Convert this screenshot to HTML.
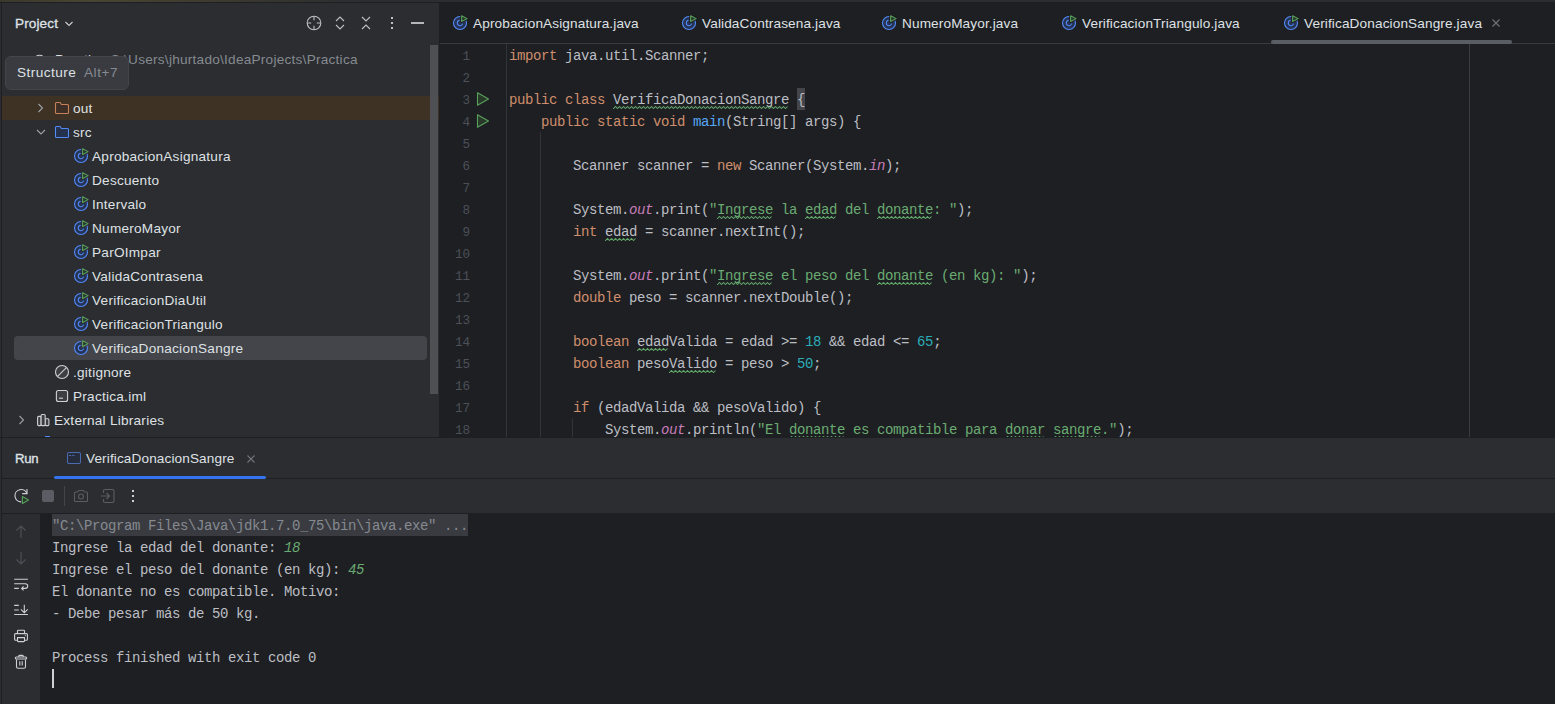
<!DOCTYPE html>
<html><head><meta charset="utf-8"><style>
*{margin:0;padding:0;box-sizing:border-box}
html,body{width:1555px;height:704px;overflow:hidden;background:#1E1F22}
body{position:relative;font-family:"Liberation Sans",sans-serif;font-size:13px;color:#DFE1E5}
.abs{position:absolute}
.ui{font-family:"Liberation Sans",sans-serif;font-size:13.6px;letter-spacing:0.25px;white-space:pre;line-height:24px}
.mono{font-family:"Liberation Mono",monospace;font-size:14px;letter-spacing:-0.4px;white-space:pre;line-height:22px}
</style></head><body>
<div class="abs" style="left:0;top:0;width:1555px;height:2px;background:linear-gradient(90deg,#3a372c 0px,#4a4532 90px,#3f3b2f 200px,#2B2D30 360px)"></div>
<div class="abs" style="left:0px;top:2px;width:1555px;height:1px;background:#1E1F22;"></div>
<div class="abs" style="left:0px;top:3px;width:439px;height:434px;background:#2B2D30;"></div>
<div class="abs" style="left:0px;top:3px;width:1px;height:434px;background:#2B2D30;"></div>
<div class="abs" style="left:1px;top:3px;width:1px;height:434px;background:#1E1F22;"></div>
<div class="abs" style="left:439px;top:3px;width:1px;height:434px;background:#1E1F22;"></div>
<div class="abs" style="left:440px;top:3px;width:1115px;height:434px;background:#1E1F22;"></div>
<div class="abs" style="left:0px;top:437px;width:1555px;height:1px;background:#1E1F22;"></div>
<div class="abs" style="left:0px;top:438px;width:1555px;height:266px;background:#2B2D30;"></div>
<div class="abs" style="left:1px;top:438px;width:1px;height:266px;background:#1E1F22;"></div>
<div class="abs" style="left:2px;top:96px;width:437px;height:24px;background:#3E3224;"></div>
<div class="abs" style="left:14px;top:336px;width:413px;height:24px;background:#43454A;border-radius:4px"></div>
<div class="abs ui" style="left:15px;top:12px;color:#DFE1E5;letter-spacing:0.1px;-webkit-text-stroke:0.3px #DFE1E5">Project</div>
<svg class="abs" style="left:64px;top:20px" width="10" height="8" viewBox="0 0 10 8"><path d="M1.5 2 L5 5.5 L8.5 2" fill="none" stroke="#CED0D6" stroke-width="1.1"/></svg>
<svg class="abs" style="left:305px;top:14px" width="18" height="18" viewBox="0 0 18 18" fill="none" stroke="#BDC0C5" stroke-width="1.1"><circle cx="9" cy="9" r="6.8"/><path d="M9 2.5V6.2M9 11.8V15.5M2.5 9H6.2M11.8 9H15.5"/></svg>
<svg class="abs" style="left:334px;top:14px" width="12" height="18" viewBox="0 0 12 18" fill="none" stroke="#BDC0C5" stroke-width="1.1"><path d="M2 7 L6 3 L10 7M2 11 L6 15 L10 11"/></svg>
<svg class="abs" style="left:360px;top:14px" width="12" height="18" viewBox="0 0 12 18" fill="none" stroke="#BDC0C5" stroke-width="1.1"><path d="M2 3 L6 7 L10 3M2 15 L6 11 L10 15"/></svg>
<svg class="abs" style="left:388px;top:14px" width="8" height="18" viewBox="0 0 8 18" fill="#BDC0C5"><rect x="3" y="3" width="2" height="2"/><rect x="3" y="8" width="2" height="2"/><rect x="3" y="13" width="2" height="2"/></svg>
<div class="abs" style="left:411px;top:22px;width:13px;height:1.5px;background:#B4B6BC;"></div>
<svg class="abs" style="left:33px;top:53px" width="14" height="14" viewBox="0 0 14 14" fill="none" stroke="#CED0D6" stroke-width="1.1"><path d="M3 3.5 A4 2.5 0 0 1 10 3.5"/></svg>
<div class="abs ui" style="left:55px;top:48px;color:#DFE1E5;">Practica</div>
<div class="abs ui" style="left:110px;top:48px;color:#868A91;">C:\Users\jhurtado\IdeaProjects\Practica</div>
<svg class="abs" style="left:36px;top:102px" width="10" height="12" viewBox="0 0 10 12" fill="none" stroke="#9DA0A8" stroke-width="1.1"><path d="M2.5 2 L6.5 6 L2.5 10"/></svg>
<svg class="abs" style="left:54px;top:101px" width="16" height="14" viewBox="0 0 16 14"><path d="M1.5 2.5 Q1.5 1.5 2.5 1.5 H6 L7.5 3.5 H13.5 Q14.5 3.5 14.5 4.5 V11.5 Q14.5 12.5 13.5 12.5 H2.5 Q1.5 12.5 1.5 11.5 Z" fill="#3E2F26" stroke="#C7815A" stroke-width="1.1"/></svg>
<div class="abs ui" style="left:73px;top:97px;color:#DFE1E5;">out</div>
<svg class="abs" style="left:36px;top:127px" width="10" height="10" viewBox="0 0 10 10" fill="none" stroke="#9DA0A8" stroke-width="1.1"><path d="M1 3 L5 7 L9 3"/></svg>
<svg class="abs" style="left:54px;top:125px" width="16" height="14" viewBox="0 0 16 14"><path d="M1.5 2.5 Q1.5 1.5 2.5 1.5 H6 L7.5 3.5 H13.5 Q14.5 3.5 14.5 4.5 V11.5 Q14.5 12.5 13.5 12.5 H2.5 Q1.5 12.5 1.5 11.5 Z" fill="#25324D" stroke="#548AF7" stroke-width="1.1"/></svg>
<div class="abs ui" style="left:73px;top:121px;color:#DFE1E5;">src</div>
<svg class="abs" style="left:73px;top:147px" width="18" height="18" viewBox="0 0 18 18"><circle cx="8" cy="9" r="6.5" fill="#253354" stroke="#548AF7" stroke-width="1.1"/><path d="M7.6 6.3 A2.7 2.7 0 1 0 10.6 9.7" fill="none" stroke="#548AF7" stroke-width="1.05"/><path d="M9.6 1.7 L9.6 7.5 L15.1 4.6 Z" fill="#2B2D30" stroke="#2B2D30" stroke-width="2.8" stroke-linejoin="round"/><path d="M9.6 1.7 L9.6 7.5 L15.1 4.6 Z" fill="#283829" stroke="#58A05E" stroke-width="1.05" stroke-linejoin="round"/></svg>
<div class="abs ui" style="left:92px;top:145px;color:#DFE1E5;">AprobacionAsignatura</div>
<svg class="abs" style="left:73px;top:171px" width="18" height="18" viewBox="0 0 18 18"><circle cx="8" cy="9" r="6.5" fill="#253354" stroke="#548AF7" stroke-width="1.1"/><path d="M7.6 6.3 A2.7 2.7 0 1 0 10.6 9.7" fill="none" stroke="#548AF7" stroke-width="1.05"/><path d="M9.6 1.7 L9.6 7.5 L15.1 4.6 Z" fill="#2B2D30" stroke="#2B2D30" stroke-width="2.8" stroke-linejoin="round"/><path d="M9.6 1.7 L9.6 7.5 L15.1 4.6 Z" fill="#283829" stroke="#58A05E" stroke-width="1.05" stroke-linejoin="round"/></svg>
<div class="abs ui" style="left:92px;top:169px;color:#DFE1E5;">Descuento</div>
<svg class="abs" style="left:73px;top:195px" width="18" height="18" viewBox="0 0 18 18"><circle cx="8" cy="9" r="6.5" fill="#253354" stroke="#548AF7" stroke-width="1.1"/><path d="M7.6 6.3 A2.7 2.7 0 1 0 10.6 9.7" fill="none" stroke="#548AF7" stroke-width="1.05"/><path d="M9.6 1.7 L9.6 7.5 L15.1 4.6 Z" fill="#2B2D30" stroke="#2B2D30" stroke-width="2.8" stroke-linejoin="round"/><path d="M9.6 1.7 L9.6 7.5 L15.1 4.6 Z" fill="#283829" stroke="#58A05E" stroke-width="1.05" stroke-linejoin="round"/></svg>
<div class="abs ui" style="left:92px;top:193px;color:#DFE1E5;">Intervalo</div>
<svg class="abs" style="left:73px;top:219px" width="18" height="18" viewBox="0 0 18 18"><circle cx="8" cy="9" r="6.5" fill="#253354" stroke="#548AF7" stroke-width="1.1"/><path d="M7.6 6.3 A2.7 2.7 0 1 0 10.6 9.7" fill="none" stroke="#548AF7" stroke-width="1.05"/><path d="M9.6 1.7 L9.6 7.5 L15.1 4.6 Z" fill="#2B2D30" stroke="#2B2D30" stroke-width="2.8" stroke-linejoin="round"/><path d="M9.6 1.7 L9.6 7.5 L15.1 4.6 Z" fill="#283829" stroke="#58A05E" stroke-width="1.05" stroke-linejoin="round"/></svg>
<div class="abs ui" style="left:92px;top:217px;color:#DFE1E5;">NumeroMayor</div>
<svg class="abs" style="left:73px;top:243px" width="18" height="18" viewBox="0 0 18 18"><circle cx="8" cy="9" r="6.5" fill="#253354" stroke="#548AF7" stroke-width="1.1"/><path d="M7.6 6.3 A2.7 2.7 0 1 0 10.6 9.7" fill="none" stroke="#548AF7" stroke-width="1.05"/><path d="M9.6 1.7 L9.6 7.5 L15.1 4.6 Z" fill="#2B2D30" stroke="#2B2D30" stroke-width="2.8" stroke-linejoin="round"/><path d="M9.6 1.7 L9.6 7.5 L15.1 4.6 Z" fill="#283829" stroke="#58A05E" stroke-width="1.05" stroke-linejoin="round"/></svg>
<div class="abs ui" style="left:92px;top:241px;color:#DFE1E5;">ParOImpar</div>
<svg class="abs" style="left:73px;top:267px" width="18" height="18" viewBox="0 0 18 18"><circle cx="8" cy="9" r="6.5" fill="#253354" stroke="#548AF7" stroke-width="1.1"/><path d="M7.6 6.3 A2.7 2.7 0 1 0 10.6 9.7" fill="none" stroke="#548AF7" stroke-width="1.05"/><path d="M9.6 1.7 L9.6 7.5 L15.1 4.6 Z" fill="#2B2D30" stroke="#2B2D30" stroke-width="2.8" stroke-linejoin="round"/><path d="M9.6 1.7 L9.6 7.5 L15.1 4.6 Z" fill="#283829" stroke="#58A05E" stroke-width="1.05" stroke-linejoin="round"/></svg>
<div class="abs ui" style="left:92px;top:265px;color:#DFE1E5;">ValidaContrasena</div>
<svg class="abs" style="left:73px;top:291px" width="18" height="18" viewBox="0 0 18 18"><circle cx="8" cy="9" r="6.5" fill="#253354" stroke="#548AF7" stroke-width="1.1"/><path d="M7.6 6.3 A2.7 2.7 0 1 0 10.6 9.7" fill="none" stroke="#548AF7" stroke-width="1.05"/><path d="M9.6 1.7 L9.6 7.5 L15.1 4.6 Z" fill="#2B2D30" stroke="#2B2D30" stroke-width="2.8" stroke-linejoin="round"/><path d="M9.6 1.7 L9.6 7.5 L15.1 4.6 Z" fill="#283829" stroke="#58A05E" stroke-width="1.05" stroke-linejoin="round"/></svg>
<div class="abs ui" style="left:92px;top:289px;color:#DFE1E5;">VerificacionDiaUtil</div>
<svg class="abs" style="left:73px;top:315px" width="18" height="18" viewBox="0 0 18 18"><circle cx="8" cy="9" r="6.5" fill="#253354" stroke="#548AF7" stroke-width="1.1"/><path d="M7.6 6.3 A2.7 2.7 0 1 0 10.6 9.7" fill="none" stroke="#548AF7" stroke-width="1.05"/><path d="M9.6 1.7 L9.6 7.5 L15.1 4.6 Z" fill="#2B2D30" stroke="#2B2D30" stroke-width="2.8" stroke-linejoin="round"/><path d="M9.6 1.7 L9.6 7.5 L15.1 4.6 Z" fill="#283829" stroke="#58A05E" stroke-width="1.05" stroke-linejoin="round"/></svg>
<div class="abs ui" style="left:92px;top:313px;color:#DFE1E5;">VerificacionTriangulo</div>
<svg class="abs" style="left:73px;top:339px" width="18" height="18" viewBox="0 0 18 18"><circle cx="8" cy="9" r="6.5" fill="#253354" stroke="#548AF7" stroke-width="1.1"/><path d="M7.6 6.3 A2.7 2.7 0 1 0 10.6 9.7" fill="none" stroke="#548AF7" stroke-width="1.05"/><path d="M9.6 1.7 L9.6 7.5 L15.1 4.6 Z" fill="#43454A" stroke="#43454A" stroke-width="2.8" stroke-linejoin="round"/><path d="M9.6 1.7 L9.6 7.5 L15.1 4.6 Z" fill="#283829" stroke="#58A05E" stroke-width="1.05" stroke-linejoin="round"/></svg>
<div class="abs ui" style="left:92px;top:337px;color:#DFE1E5;">VerificaDonacionSangre</div>
<svg class="abs" style="left:54px;top:364px" width="16" height="16" viewBox="0 0 16 16" fill="none" stroke="#CED0D6" stroke-width="1.1"><circle cx="8" cy="8" r="6.5" fill="#3C3E42"/><path d="M3.6 12.4 L12.4 3.6"/></svg>
<div class="abs ui" style="left:73px;top:361px;color:#DFE1E5;">.gitignore</div>
<svg class="abs" style="left:54px;top:388px" width="16" height="16" viewBox="0 0 16 16" fill="none" stroke="#CED0D6" stroke-width="1.1"><rect x="2.4" y="2.5" width="11.2" height="11" rx="2" fill="#3C3E42"/><path d="M5 10.2 H9"/></svg>
<div class="abs ui" style="left:73px;top:385px;color:#DFE1E5;">Practica.iml</div>
<svg class="abs" style="left:17px;top:414px" width="10" height="12" viewBox="0 0 10 12" fill="none" stroke="#9DA0A8" stroke-width="1.1"><path d="M2.5 2 L6.5 6 L2.5 10"/></svg>
<svg class="abs" style="left:35px;top:412px" width="16" height="16" viewBox="0 0 16 16" fill="#3C3E42" stroke="#CED0D6" stroke-width="1.1"><rect x="2.6" y="4.4" width="3.5" height="9.2" rx="1"/><rect x="10.2" y="6.7" width="3.7" height="6.9" rx="1"/><rect x="6.1" y="2.5" width="4.1" height="11.1" rx="1"/></svg>
<div class="abs ui" style="left:54px;top:409px;color:#DFE1E5;">External Libraries</div>
<div class="abs" style="left:45px;top:436px;width:5px;height:1px;background:#548AF7;"></div>
<div class="abs" style="left:430px;top:45px;width:8px;height:349px;background:#4E5054;"></div>
<div class="abs" style="left:5px;top:56px;width:124px;height:34px;background:#393B40;border:1px solid #43454A;border-radius:6px"></div>
<div class="abs ui" style="left:17px;top:61px;color:#DFE1E5;letter-spacing:0.45px">Structure</div>
<div class="abs ui" style="left:84px;top:61px;color:#868A91;letter-spacing:0.55px">Alt+7</div>
<svg class="abs" style="left:452px;top:14px;opacity:1.0" width="18" height="18" viewBox="0 0 18 18"><circle cx="8" cy="9" r="6.5" fill="#253354" stroke="#548AF7" stroke-width="1.1"/><path d="M7.6 6.3 A2.7 2.7 0 1 0 10.6 9.7" fill="none" stroke="#548AF7" stroke-width="1.05"/><path d="M9.6 1.7 L9.6 7.5 L15.1 4.6 Z" fill="#1E1F22" stroke="#1E1F22" stroke-width="2.8" stroke-linejoin="round"/><path d="M9.6 1.7 L9.6 7.5 L15.1 4.6 Z" fill="#283829" stroke="#58A05E" stroke-width="1.05" stroke-linejoin="round"/></svg>
<div class="abs ui" style="left:473px;top:12px;color:#DFE1E5;letter-spacing:0.13px">AprobacionAsignatura.java</div>
<svg class="abs" style="left:681px;top:14px;opacity:1.0" width="18" height="18" viewBox="0 0 18 18"><circle cx="8" cy="9" r="6.5" fill="#253354" stroke="#548AF7" stroke-width="1.1"/><path d="M7.6 6.3 A2.7 2.7 0 1 0 10.6 9.7" fill="none" stroke="#548AF7" stroke-width="1.05"/><path d="M9.6 1.7 L9.6 7.5 L15.1 4.6 Z" fill="#1E1F22" stroke="#1E1F22" stroke-width="2.8" stroke-linejoin="round"/><path d="M9.6 1.7 L9.6 7.5 L15.1 4.6 Z" fill="#283829" stroke="#58A05E" stroke-width="1.05" stroke-linejoin="round"/></svg>
<div class="abs ui" style="left:702px;top:12px;color:#DFE1E5;letter-spacing:0.13px">ValidaContrasena.java</div>
<svg class="abs" style="left:881px;top:14px;opacity:1.0" width="18" height="18" viewBox="0 0 18 18"><circle cx="8" cy="9" r="6.5" fill="#253354" stroke="#548AF7" stroke-width="1.1"/><path d="M7.6 6.3 A2.7 2.7 0 1 0 10.6 9.7" fill="none" stroke="#548AF7" stroke-width="1.05"/><path d="M9.6 1.7 L9.6 7.5 L15.1 4.6 Z" fill="#1E1F22" stroke="#1E1F22" stroke-width="2.8" stroke-linejoin="round"/><path d="M9.6 1.7 L9.6 7.5 L15.1 4.6 Z" fill="#283829" stroke="#58A05E" stroke-width="1.05" stroke-linejoin="round"/></svg>
<div class="abs ui" style="left:902px;top:12px;color:#DFE1E5;letter-spacing:0.13px">NumeroMayor.java</div>
<svg class="abs" style="left:1061px;top:14px;opacity:1.0" width="18" height="18" viewBox="0 0 18 18"><circle cx="8" cy="9" r="6.5" fill="#253354" stroke="#548AF7" stroke-width="1.1"/><path d="M7.6 6.3 A2.7 2.7 0 1 0 10.6 9.7" fill="none" stroke="#548AF7" stroke-width="1.05"/><path d="M9.6 1.7 L9.6 7.5 L15.1 4.6 Z" fill="#1E1F22" stroke="#1E1F22" stroke-width="2.8" stroke-linejoin="round"/><path d="M9.6 1.7 L9.6 7.5 L15.1 4.6 Z" fill="#283829" stroke="#58A05E" stroke-width="1.05" stroke-linejoin="round"/></svg>
<div class="abs ui" style="left:1082px;top:12px;color:#DFE1E5;letter-spacing:0.13px">VerificacionTriangulo.java</div>
<svg class="abs" style="left:1283px;top:14px;opacity:1.0" width="18" height="18" viewBox="0 0 18 18"><circle cx="8" cy="9" r="6.5" fill="#253354" stroke="#548AF7" stroke-width="1.1"/><path d="M7.6 6.3 A2.7 2.7 0 1 0 10.6 9.7" fill="none" stroke="#548AF7" stroke-width="1.05"/><path d="M9.6 1.7 L9.6 7.5 L15.1 4.6 Z" fill="#1E1F22" stroke="#1E1F22" stroke-width="2.8" stroke-linejoin="round"/><path d="M9.6 1.7 L9.6 7.5 L15.1 4.6 Z" fill="#283829" stroke="#58A05E" stroke-width="1.05" stroke-linejoin="round"/></svg>
<div class="abs ui" style="left:1304px;top:12px;color:#DFE1E5;letter-spacing:0.13px">VerificaDonacionSangre.java</div>
<svg class="abs" style="left:1490px;top:17px" width="12" height="12" viewBox="0 0 12 12" fill="none" stroke="#6F737A" stroke-width="1.1"><path d="M2.5 2.5 L9.5 9.5 M9.5 2.5 L2.5 9.5"/></svg>
<div class="abs" style="left:440px;top:43px;width:1115px;height:1px;background:#393B40;"></div>
<div class="abs" style="left:1271px;top:40px;width:241px;height:4px;background:#5A5D63;border-radius:2px"></div>
<div class="abs" style="left:506px;top:44px;width:1px;height:393px;background:#313438;"></div>
<div class="abs" style="left:540px;top:132px;width:1px;height:305px;background:#313438;"></div>
<div class="abs" style="left:572px;top:418px;width:1px;height:19px;background:#313438;"></div>
<div class="abs" style="left:1469px;top:44px;width:1px;height:393px;background:#393B40;"></div>
<div class="abs" style="left:797px;top:88px;width:8px;height:22px;background:#43454A;"></div>
<div class="abs mono" style="left:440px;top:46px;width:30px;text-align:right;color:#4B5059;font-size:12.6px;letter-spacing:0px">1</div>
<div class="abs mono" style="left:440px;top:68px;width:30px;text-align:right;color:#4B5059;font-size:12.6px;letter-spacing:0px">2</div>
<div class="abs mono" style="left:440px;top:90px;width:30px;text-align:right;color:#4B5059;font-size:12.6px;letter-spacing:0px">3</div>
<div class="abs mono" style="left:440px;top:112px;width:30px;text-align:right;color:#4B5059;font-size:12.6px;letter-spacing:0px">4</div>
<div class="abs mono" style="left:440px;top:134px;width:30px;text-align:right;color:#4B5059;font-size:12.6px;letter-spacing:0px">5</div>
<div class="abs mono" style="left:440px;top:156px;width:30px;text-align:right;color:#4B5059;font-size:12.6px;letter-spacing:0px">6</div>
<div class="abs mono" style="left:440px;top:178px;width:30px;text-align:right;color:#4B5059;font-size:12.6px;letter-spacing:0px">7</div>
<div class="abs mono" style="left:440px;top:200px;width:30px;text-align:right;color:#4B5059;font-size:12.6px;letter-spacing:0px">8</div>
<div class="abs mono" style="left:440px;top:222px;width:30px;text-align:right;color:#4B5059;font-size:12.6px;letter-spacing:0px">9</div>
<div class="abs mono" style="left:440px;top:244px;width:30px;text-align:right;color:#4B5059;font-size:12.6px;letter-spacing:0px">10</div>
<div class="abs mono" style="left:440px;top:266px;width:30px;text-align:right;color:#4B5059;font-size:12.6px;letter-spacing:0px">11</div>
<div class="abs mono" style="left:440px;top:288px;width:30px;text-align:right;color:#4B5059;font-size:12.6px;letter-spacing:0px">12</div>
<div class="abs mono" style="left:440px;top:310px;width:30px;text-align:right;color:#4B5059;font-size:12.6px;letter-spacing:0px">13</div>
<div class="abs mono" style="left:440px;top:332px;width:30px;text-align:right;color:#4B5059;font-size:12.6px;letter-spacing:0px">14</div>
<div class="abs mono" style="left:440px;top:354px;width:30px;text-align:right;color:#4B5059;font-size:12.6px;letter-spacing:0px">15</div>
<div class="abs mono" style="left:440px;top:376px;width:30px;text-align:right;color:#4B5059;font-size:12.6px;letter-spacing:0px">16</div>
<div class="abs mono" style="left:440px;top:398px;width:30px;text-align:right;color:#4B5059;font-size:12.6px;letter-spacing:0px">17</div>
<div class="abs mono" style="left:440px;top:420px;width:30px;text-align:right;color:#4B5059;font-size:12.6px;letter-spacing:0px">18</div>
<svg class="abs" style="left:475px;top:91px" width="16" height="16" viewBox="0 0 16 16"><path d="M2.5 1.8 L2.5 14.2 L13.5 8 Z" fill="#283829" stroke="#58A05E" stroke-width="1.1" stroke-linejoin="round"/></svg>
<svg class="abs" style="left:475px;top:113px" width="16" height="16" viewBox="0 0 16 16"><path d="M2.5 1.8 L2.5 14.2 L13.5 8 Z" fill="#283829" stroke="#58A05E" stroke-width="1.1" stroke-linejoin="round"/></svg>
<div class="abs" style="left:509px;top:44px;width:1046px;height:393px;overflow:hidden"><div class="abs mono" style="left:0;top:1px;color:#BCBEC4"><span style="color:#CF8E6D">import</span> java.util.Scanner;

<span style="color:#CF8E6D">public class </span>VerificaDonacionSangre {
    <span style="color:#CF8E6D">public static void </span><span style="color:#56A8F5">main</span>(String[] args) {

        Scanner scanner = <span style="color:#CF8E6D">new </span>Scanner(System.<span style="color:#C77DBB;font-style:italic">in</span>);

        System.<span style="color:#C77DBB;font-style:italic">out</span>.print(<span style="color:#6AAB73">&quot;Ingrese la edad del donante: &quot;</span>);
        <span style="color:#CF8E6D">int </span>edad = scanner.nextInt();

        System.<span style="color:#C77DBB;font-style:italic">out</span>.print(<span style="color:#6AAB73">&quot;Ingrese el peso del donante (en kg): &quot;</span>);
        <span style="color:#CF8E6D">double </span>peso = scanner.nextDouble();

        <span style="color:#CF8E6D">boolean </span>edadValida = edad &gt;= <span style="color:#2AACB8">18</span> &amp;&amp; edad &lt;= <span style="color:#2AACB8">65</span>;
        <span style="color:#CF8E6D">boolean </span>pesoValido = peso &gt; <span style="color:#2AACB8">50</span>;

        <span style="color:#CF8E6D">if </span>(edadValida &amp;&amp; pesoValido) {
            System.<span style="color:#C77DBB;font-style:italic">out</span>.println(<span style="color:#6AAB73">&quot;El donante es compatible para donar sangre.&quot;</span>);</div></div>
<div class="abs" style="left:509px;top:44px;width:1046px;height:393px;overflow:hidden"><svg class="abs" style="left:104px;top:62px" width="176" height="3" viewBox="0 0 176 3"><path d="M0 2.5 L0.5 2.5 L2.5 0.5 L4.5 2.5 L6.5 0.5 L8.5 2.5 L10.5 0.5 L12.5 2.5 L14.5 0.5 L16.5 2.5 L18.5 0.5 L20.5 2.5 L22.5 0.5 L24.5 2.5 L26.5 0.5 L28.5 2.5 L30.5 0.5 L32.5 2.5 L34.5 0.5 L36.5 2.5 L38.5 0.5 L40.5 2.5 L42.5 0.5 L44.5 2.5 L46.5 0.5 L48.5 2.5 L50.5 0.5 L52.5 2.5 L54.5 0.5 L56.5 2.5 L58.5 0.5 L60.5 2.5 L62.5 0.5 L64.5 2.5 L66.5 0.5 L68.5 2.5 L70.5 0.5 L72.5 2.5 L74.5 0.5 L76.5 2.5 L78.5 0.5 L80.5 2.5 L82.5 0.5 L84.5 2.5 L86.5 0.5 L88.5 2.5 L90.5 0.5 L92.5 2.5 L94.5 0.5 L96.5 2.5 L98.5 0.5 L100.5 2.5 L102.5 0.5 L104.5 2.5 L106.5 0.5 L108.5 2.5 L110.5 0.5 L112.5 2.5 L114.5 0.5 L116.5 2.5 L118.5 0.5 L120.5 2.5 L122.5 0.5 L124.5 2.5 L126.5 0.5 L128.5 2.5 L130.5 0.5 L132.5 2.5 L134.5 0.5 L136.5 2.5 L138.5 0.5 L140.5 2.5 L142.5 0.5 L144.5 2.5 L146.5 0.5 L148.5 2.5 L150.5 0.5 L152.5 2.5 L154.5 0.5 L156.5 2.5 L158.5 0.5 L160.5 2.5 L162.5 0.5 L164.5 2.5 L166.5 0.5 L168.5 2.5 L170.5 0.5 L172.5 2.5 L174.5 0.5" fill="none" stroke="#62A66A" stroke-width="1.05"/></svg><svg class="abs" style="left:208px;top:172px" width="56" height="3" viewBox="0 0 56 3"><path d="M0 2.5 L0.5 2.5 L2.5 0.5 L4.5 2.5 L6.5 0.5 L8.5 2.5 L10.5 0.5 L12.5 2.5 L14.5 0.5 L16.5 2.5 L18.5 0.5 L20.5 2.5 L22.5 0.5 L24.5 2.5 L26.5 0.5 L28.5 2.5 L30.5 0.5 L32.5 2.5 L34.5 0.5 L36.5 2.5 L38.5 0.5 L40.5 2.5 L42.5 0.5 L44.5 2.5 L46.5 0.5 L48.5 2.5 L50.5 0.5 L52.5 2.5 L54.5 0.5" fill="none" stroke="#62A66A" stroke-width="1.05"/></svg><svg class="abs" style="left:296px;top:172px" width="32" height="3" viewBox="0 0 32 3"><path d="M0 2.5 L0.5 2.5 L2.5 0.5 L4.5 2.5 L6.5 0.5 L8.5 2.5 L10.5 0.5 L12.5 2.5 L14.5 0.5 L16.5 2.5 L18.5 0.5 L20.5 2.5 L22.5 0.5 L24.5 2.5 L26.5 0.5 L28.5 2.5 L30.5 0.5" fill="none" stroke="#62A66A" stroke-width="1.05"/></svg><svg class="abs" style="left:368px;top:172px" width="56" height="3" viewBox="0 0 56 3"><path d="M0 2.5 L0.5 2.5 L2.5 0.5 L4.5 2.5 L6.5 0.5 L8.5 2.5 L10.5 0.5 L12.5 2.5 L14.5 0.5 L16.5 2.5 L18.5 0.5 L20.5 2.5 L22.5 0.5 L24.5 2.5 L26.5 0.5 L28.5 2.5 L30.5 0.5 L32.5 2.5 L34.5 0.5 L36.5 2.5 L38.5 0.5 L40.5 2.5 L42.5 0.5 L44.5 2.5 L46.5 0.5 L48.5 2.5 L50.5 0.5 L52.5 2.5 L54.5 0.5" fill="none" stroke="#62A66A" stroke-width="1.05"/></svg><svg class="abs" style="left:96px;top:194px" width="32" height="3" viewBox="0 0 32 3"><path d="M0 2.5 L0.5 2.5 L2.5 0.5 L4.5 2.5 L6.5 0.5 L8.5 2.5 L10.5 0.5 L12.5 2.5 L14.5 0.5 L16.5 2.5 L18.5 0.5 L20.5 2.5 L22.5 0.5 L24.5 2.5 L26.5 0.5 L28.5 2.5 L30.5 0.5" fill="none" stroke="#62A66A" stroke-width="1.05"/></svg><svg class="abs" style="left:208px;top:238px" width="56" height="3" viewBox="0 0 56 3"><path d="M0 2.5 L0.5 2.5 L2.5 0.5 L4.5 2.5 L6.5 0.5 L8.5 2.5 L10.5 0.5 L12.5 2.5 L14.5 0.5 L16.5 2.5 L18.5 0.5 L20.5 2.5 L22.5 0.5 L24.5 2.5 L26.5 0.5 L28.5 2.5 L30.5 0.5 L32.5 2.5 L34.5 0.5 L36.5 2.5 L38.5 0.5 L40.5 2.5 L42.5 0.5 L44.5 2.5 L46.5 0.5 L48.5 2.5 L50.5 0.5 L52.5 2.5 L54.5 0.5" fill="none" stroke="#62A66A" stroke-width="1.05"/></svg><svg class="abs" style="left:368px;top:238px" width="56" height="3" viewBox="0 0 56 3"><path d="M0 2.5 L0.5 2.5 L2.5 0.5 L4.5 2.5 L6.5 0.5 L8.5 2.5 L10.5 0.5 L12.5 2.5 L14.5 0.5 L16.5 2.5 L18.5 0.5 L20.5 2.5 L22.5 0.5 L24.5 2.5 L26.5 0.5 L28.5 2.5 L30.5 0.5 L32.5 2.5 L34.5 0.5 L36.5 2.5 L38.5 0.5 L40.5 2.5 L42.5 0.5 L44.5 2.5 L46.5 0.5 L48.5 2.5 L50.5 0.5 L52.5 2.5 L54.5 0.5" fill="none" stroke="#62A66A" stroke-width="1.05"/></svg><svg class="abs" style="left:128px;top:304px" width="32" height="3" viewBox="0 0 32 3"><path d="M0 2.5 L0.5 2.5 L2.5 0.5 L4.5 2.5 L6.5 0.5 L8.5 2.5 L10.5 0.5 L12.5 2.5 L14.5 0.5 L16.5 2.5 L18.5 0.5 L20.5 2.5 L22.5 0.5 L24.5 2.5 L26.5 0.5 L28.5 2.5 L30.5 0.5" fill="none" stroke="#62A66A" stroke-width="1.05"/></svg><svg class="abs" style="left:160px;top:326px" width="48" height="3" viewBox="0 0 48 3"><path d="M0 2.5 L0.5 2.5 L2.5 0.5 L4.5 2.5 L6.5 0.5 L8.5 2.5 L10.5 0.5 L12.5 2.5 L14.5 0.5 L16.5 2.5 L18.5 0.5 L20.5 2.5 L22.5 0.5 L24.5 2.5 L26.5 0.5 L28.5 2.5 L30.5 0.5 L32.5 2.5 L34.5 0.5 L36.5 2.5 L38.5 0.5 L40.5 2.5 L42.5 0.5 L44.5 2.5 L46.5 0.5" fill="none" stroke="#62A66A" stroke-width="1.05"/></svg><svg class="abs" style="left:280px;top:392px" width="56" height="3" viewBox="0 0 56 3"><path d="M0 2.5 L0.5 2.5 L2.5 0.5 L4.5 2.5 L6.5 0.5 L8.5 2.5 L10.5 0.5 L12.5 2.5 L14.5 0.5 L16.5 2.5 L18.5 0.5 L20.5 2.5 L22.5 0.5 L24.5 2.5 L26.5 0.5 L28.5 2.5 L30.5 0.5 L32.5 2.5 L34.5 0.5 L36.5 2.5 L38.5 0.5 L40.5 2.5 L42.5 0.5 L44.5 2.5 L46.5 0.5 L48.5 2.5 L50.5 0.5 L52.5 2.5 L54.5 0.5" fill="none" stroke="#62A66A" stroke-width="1.05"/></svg><svg class="abs" style="left:496px;top:392px" width="40" height="3" viewBox="0 0 40 3"><path d="M0 2.5 L0.5 2.5 L2.5 0.5 L4.5 2.5 L6.5 0.5 L8.5 2.5 L10.5 0.5 L12.5 2.5 L14.5 0.5 L16.5 2.5 L18.5 0.5 L20.5 2.5 L22.5 0.5 L24.5 2.5 L26.5 0.5 L28.5 2.5 L30.5 0.5 L32.5 2.5 L34.5 0.5 L36.5 2.5 L38.5 0.5" fill="none" stroke="#62A66A" stroke-width="1.05"/></svg><svg class="abs" style="left:544px;top:392px" width="48" height="3" viewBox="0 0 48 3"><path d="M0 2.5 L0.5 2.5 L2.5 0.5 L4.5 2.5 L6.5 0.5 L8.5 2.5 L10.5 0.5 L12.5 2.5 L14.5 0.5 L16.5 2.5 L18.5 0.5 L20.5 2.5 L22.5 0.5 L24.5 2.5 L26.5 0.5 L28.5 2.5 L30.5 0.5 L32.5 2.5 L34.5 0.5 L36.5 2.5 L38.5 0.5 L40.5 2.5 L42.5 0.5 L44.5 2.5 L46.5 0.5" fill="none" stroke="#62A66A" stroke-width="1.05"/></svg></div>
<div class="abs ui" style="left:15px;top:447px;color:#DFE1E5;font-size:13.2px;letter-spacing:-0.3px;-webkit-text-stroke:0.35px #DFE1E5">Run</div>
<svg class="abs" style="left:66px;top:451px" width="16" height="14" viewBox="0 0 16 14"><rect x="1.5" y="1.5" width="13" height="11" rx="1.5" fill="#262C3B" stroke="#4A6BAD" stroke-width="1.05"/><path d="M3.4 4.5 H4.8 M6.6 4.5 H8" stroke="#4A6BAD" stroke-width="1" stroke-linecap="round"/></svg>
<div class="abs ui" style="left:86px;top:447px;color:#DFE1E5;letter-spacing:0.12px">VerificaDonacionSangre</div>
<svg class="abs" style="left:245px;top:453px" width="12" height="12" viewBox="0 0 12 12" fill="none" stroke="#6F737A" stroke-width="1.1"><path d="M2.5 2.5 L9.5 9.5 M9.5 2.5 L2.5 9.5"/></svg>
<div class="abs" style="left:2px;top:478px;width:1553px;height:1px;background:#1E1F22;"></div>
<div class="abs" style="left:54px;top:476px;width:212px;height:3px;background:#3574F0;border-radius:1.5px"></div>
<svg class="abs" style="left:13px;top:487px" width="18" height="18" viewBox="0 0 18 18" fill="none" stroke-width="1.1"><path d="M14 6.6 A6.2 6.2 0 1 0 8.2 14.9" stroke="#CED0D6"/><path d="M9.2 6.6 H14 V2" stroke="#CED0D6"/><path d="M9.4 9.6 L9.4 16.6 L15.5 13.1 Z" fill="#283829" stroke="#58A05E" stroke-linejoin="round"/></svg>
<div class="abs" style="left:42px;top:490px;width:12px;height:12px;background:#5A5D63;border-radius:2px"></div>
<div class="abs" style="left:64px;top:486px;width:1px;height:20px;background:#43454A;"></div>
<svg class="abs" style="left:73px;top:489px" width="16" height="14" viewBox="0 0 16 14" fill="none" stroke="#5A5D63" stroke-width="1.1"><path d="M1.5 4 Q1.5 3 2.5 3 H4.5 L5.8 1.5 H10.2 L11.5 3 H13.5 Q14.5 3 14.5 4 V11.5 Q14.5 12.5 13.5 12.5 H2.5 Q1.5 12.5 1.5 11.5 Z"/><circle cx="8" cy="7.5" r="2.5"/></svg>
<svg class="abs" style="left:100px;top:488px" width="16" height="16" viewBox="0 0 16 16" fill="none" stroke="#5A5D63" stroke-width="1.1"><path d="M3.5 5 V3 Q3.5 1.5 5 1.5 H12.5 Q14 1.5 14 3 V13 Q14 14.5 12.5 14.5 H5 Q3.5 14.5 3.5 13 V11 M1 8 H9.5 M6.5 5 L9.5 8 L6.5 11"/></svg>
<svg class="abs" style="left:129px;top:488px" width="8" height="16" viewBox="0 0 8 16" fill="#CED0D6"><rect x="3" y="2" width="2" height="2"/><rect x="3" y="7" width="2" height="2"/><rect x="3" y="12" width="2" height="2"/></svg>
<div class="abs" style="left:2px;top:513px;width:1553px;height:1px;background:#1E1F22;"></div>
<div class="abs" style="left:40px;top:514px;width:1515px;height:190px;background:#1E1F22;"></div>
<svg class="abs" style="left:13px;top:524px" width="16" height="16" viewBox="0 0 16 16" fill="none" stroke="#4E5157" stroke-width="1.1"><path d="M8 2 V14 M3.5 6.5 L8 2 L12.5 6.5"/></svg>
<svg class="abs" style="left:13px;top:550px" width="16" height="16" viewBox="0 0 16 16" fill="none" stroke="#4E5157" stroke-width="1.1"><path d="M8 2 V14 M3.5 9.5 L8 14 L12.5 9.5"/></svg>
<svg class="abs" style="left:13px;top:577px" width="16" height="16" viewBox="0 0 16 16" fill="none" stroke="#CED0D6" stroke-width="1.1"><path d="M1.2 2.2 H14.9 M1.2 6.8 H12.2 Q14.7 6.8 14.7 9.1 Q14.7 11.4 12.2 11.4 H8.6 M10.6 9.4 L8.6 11.4 L10.6 13.4 M1.2 11.4 H5.8"/></svg>
<svg class="abs" style="left:13px;top:601px" width="16" height="16" viewBox="0 0 16 16" fill="none" stroke="#CED0D6" stroke-width="1.1"><path d="M1.2 4.4 H5.8 M1.2 9 H5.8 M1.2 13.5 H14.9 M11.3 3.8 V11.8 M7.9 8.4 L11.3 11.8 L14.7 8.4"/></svg>
<svg class="abs" style="left:13px;top:628px" width="16" height="16" viewBox="0 0 16 16" fill="none" stroke="#CED0D6" stroke-width="1.1"><path d="M4.5 5.5 V3 Q4.5 2.3 5.2 2.3 H10.8 Q11.5 2.3 11.5 3 V5.5 M4.2 12.2 H2.6 Q1.6 12.2 1.6 11.2 V6.6 Q1.6 5.6 2.6 5.6 H13.4 Q14.4 5.6 14.4 6.6 V11.2 Q14.4 12.2 13.4 12.2 H11.8 M4.5 9.6 H11.5 V12.8 Q11.5 13.6 10.7 13.6 H5.3 Q4.5 13.6 4.5 12.8 Z"/><circle cx="12.3" cy="7.6" r="0.6" fill="#CED0D6" stroke="none"/></svg>
<svg class="abs" style="left:13px;top:653px" width="16" height="16" viewBox="0 0 16 16" fill="none" stroke="#CED0D6" stroke-width="1.1"><rect x="2.3" y="4" width="11.4" height="2" rx="1"/><path d="M5.8 4 V3.2 Q5.8 2.4 6.6 2.4 H9.4 Q10.2 2.4 10.2 3.2 V4 M3.5 6.5 V13.7 Q3.5 15.2 5 15.2 H11 Q12.5 15.2 12.5 13.7 V6.5 M6.8 8.2 V12.5 M9.2 8.2 V12.5"/></svg>
<div class="abs" style="left:52px;top:514px;width:416px;height:22px;background:#393B40;"></div>
<div class="abs mono" style="left:52px;top:515px;color:#BCBEC4"><span style="color:#868A91">"C:\Program Files\Java\jdk1.7.0_75\bin\java.exe" ...</span>
Ingrese la edad del donante: <span style="color:#6AAB73;font-style:italic">18</span>
Ingrese el peso del donante (en kg): <span style="color:#6AAB73;font-style:italic">45</span>
El donante no es compatible. Motivo:
- Debe pesar m&#225;s de 50 kg.

Process finished with exit code 0</div>
<div class="abs" style="left:52px;top:669px;width:2px;height:19px;background:#CED0D6;"></div>
</body></html>
